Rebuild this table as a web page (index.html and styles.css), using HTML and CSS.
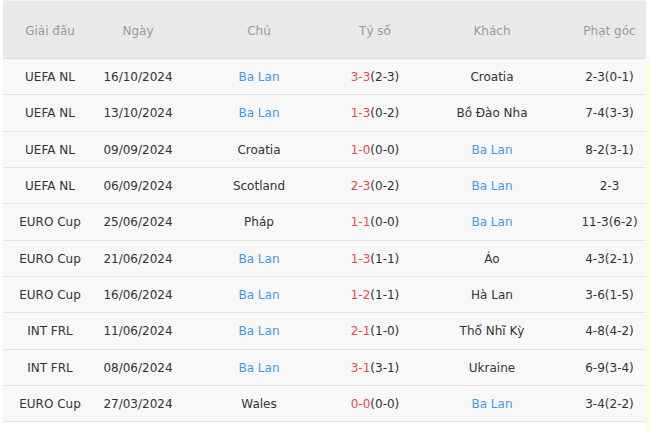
FILE: index.html
```html
<!DOCTYPE html>
<html lang="vi">
<head>
<meta charset="utf-8">
<link rel="stylesheet" href="styles.css">
</head>
<body>
<div class="page">
  <div class="table">
    <div class="row head">
      <div class="c c1">Giải đấu</div>
      <div class="c c2">Ngày</div>
      <div class="c c3">Chủ</div>
      <div class="c c4">Tỷ số</div>
      <div class="c c5">Khách</div>
      <div class="c c6">Phạt góc</div>
    </div>
    <div class="row"><div class="c c1">UEFA NL</div><div class="c c2">16/10/2024</div><div class="c c3 team">Ba Lan</div><div class="c c4"><span class="ft">3-3</span>(2-3)</div><div class="c c5">Croatia</div><div class="c c6">2-3(0-1)</div></div>
    <div class="row"><div class="c c1">UEFA NL</div><div class="c c2">13/10/2024</div><div class="c c3 team">Ba Lan</div><div class="c c4"><span class="ft">1-3</span>(0-2)</div><div class="c c5">Bồ Đào Nha</div><div class="c c6">7-4(3-3)</div></div>
    <div class="row"><div class="c c1">UEFA NL</div><div class="c c2">09/09/2024</div><div class="c c3">Croatia</div><div class="c c4"><span class="ft">1-0</span>(0-0)</div><div class="c c5 team">Ba Lan</div><div class="c c6">8-2(3-1)</div></div>
    <div class="row"><div class="c c1">UEFA NL</div><div class="c c2">06/09/2024</div><div class="c c3">Scotland</div><div class="c c4"><span class="ft">2-3</span>(0-2)</div><div class="c c5 team">Ba Lan</div><div class="c c6">2-3</div></div>
    <div class="row"><div class="c c1">EURO Cup</div><div class="c c2">25/06/2024</div><div class="c c3">Pháp</div><div class="c c4"><span class="ft">1-1</span>(0-0)</div><div class="c c5 team">Ba Lan</div><div class="c c6">11-3(6-2)</div></div>
    <div class="row"><div class="c c1">EURO Cup</div><div class="c c2">21/06/2024</div><div class="c c3 team">Ba Lan</div><div class="c c4"><span class="ft">1-3</span>(1-1)</div><div class="c c5">Áo</div><div class="c c6">4-3(2-1)</div></div>
    <div class="row"><div class="c c1">EURO Cup</div><div class="c c2">16/06/2024</div><div class="c c3 team">Ba Lan</div><div class="c c4"><span class="ft">1-2</span>(1-1)</div><div class="c c5">Hà Lan</div><div class="c c6">3-6(1-5)</div></div>
    <div class="row"><div class="c c1">INT FRL</div><div class="c c2">11/06/2024</div><div class="c c3 team">Ba Lan</div><div class="c c4"><span class="ft">2-1</span>(1-0)</div><div class="c c5">Thổ Nhĩ Kỳ</div><div class="c c6">4-8(4-2)</div></div>
    <div class="row"><div class="c c1">INT FRL</div><div class="c c2">08/06/2024</div><div class="c c3 team">Ba Lan</div><div class="c c4"><span class="ft">3-1</span>(3-1)</div><div class="c c5">Ukraine</div><div class="c c6">6-9(3-4)</div></div>
    <div class="row"><div class="c c1">EURO Cup</div><div class="c c2">27/03/2024</div><div class="c c3">Wales</div><div class="c c4"><span class="ft">0-0</span>(0-0)</div><div class="c c5 team">Ba Lan</div><div class="c c6">3-4(2-2)</div></div>
  </div>
  <div class="side"></div>
</div>
</body>
</html>
```
FILE: styles.css
```css
html, body {
  margin: 0;
  padding: 0;
  background: #ffffff;
}
body {
  font-family: "DejaVu Sans", Verdana, sans-serif;
  font-size: 12px;
  color: #333333;
}
.page {
  display: flex;
  width: 650px;
  height: 431px;
  padding-left: 3px;
  box-sizing: border-box;
}
.table {
  width: 643px;
  display: flex;
  flex-direction: column;
}
.side {
  flex: 1;
  margin-top: 59px;
  background: #fdfbe1;
}
.row {
  display: grid;
  grid-template-columns: 94px 82px 160px 72px 162px 73px;
  height: 34.33px;
  flex: none;
  border-bottom: 1px solid #e3e3e3;
  background: #f8f8f8;
  align-items: center;
  padding-top: 1px;
  box-sizing: content-box;
}
.row.head {
  height: 57px;
  padding-top: 0;
  background: #e9e9e9;
  border-top: 1px solid #f2f2f2;
  border-bottom: 1px solid #dcdcdc;
  color: #999999;
}
.c {
  text-align: center;
  white-space: nowrap;
}
.head .c {
  padding-top: 2px;
}
.team {
  color: #3d9be9;
}
.ft {
  color: #e8484e;
}
```
